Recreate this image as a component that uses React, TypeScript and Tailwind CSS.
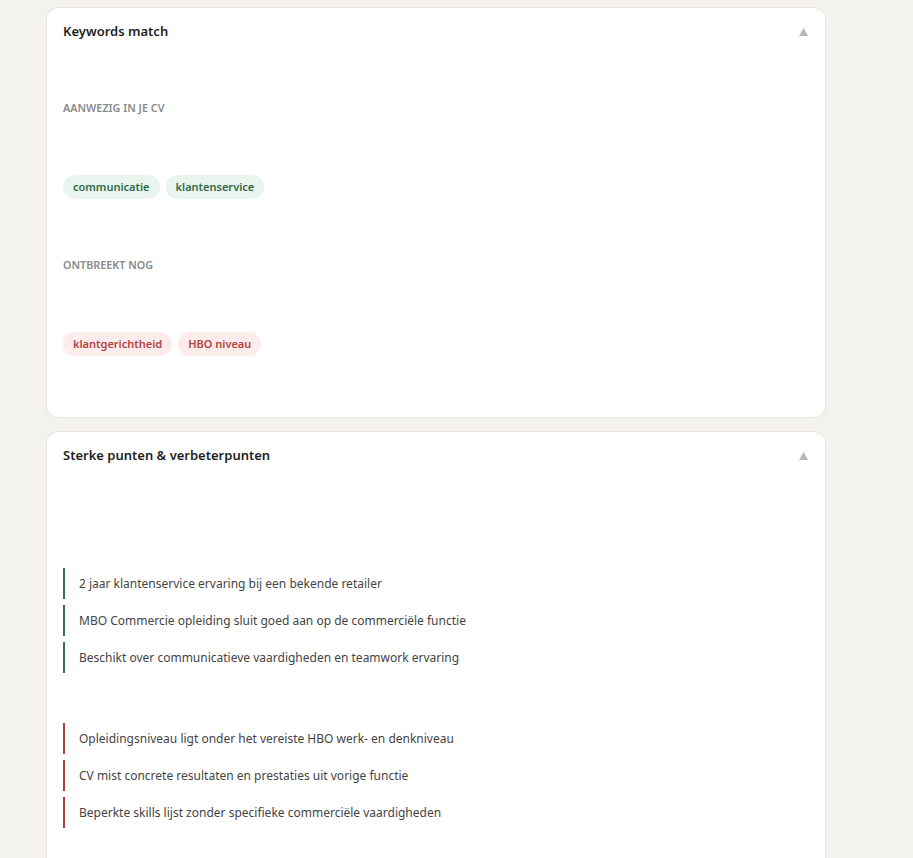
import React from "react";

const font = { fontFamily: '"Noto Sans", "Open Sans", sans-serif' };

function Header({ title }: { title: string }) {
  return (
    <div className="flex h-12 items-center justify-between pl-4 pr-4">
      <span className="text-[13px] font-semibold text-[#1f1f1f]">{title}</span>
      <svg width="9" height="8" viewBox="0 0 9 8" className="mr-[1px] mb-[1px]">
        <polygon points="4.5,0 9,8 0,8" fill="#b9b9b9" />
      </svg>
    </div>
  );
}

function Pill({ text, tone }: { text: string; tone: "green" | "red" }) {
  return (
    <span
      className={
        tone === "green"
          ? "inline-flex h-6 items-center rounded-full bg-[#e8f4ed] px-[10px] text-[11px] font-semibold text-[#2f6a48]"
          : "inline-flex h-6 items-center rounded-full bg-[#fcecec] px-[10px] text-[11px] font-semibold text-[#b4433f]"
      }
    >
      {text}
    </span>
  );
}

function Item({ text, tone }: { text: string; tone: "green" | "red" }) {
  return (
    <div
      className={
        tone === "green"
          ? "flex h-[31px] items-center border-l-2 border-[#3e6b54] pl-[14px] text-[12px] text-[#444444]"
          : "flex h-[31px] items-center border-l-2 border-[#a9403f] pl-[14px] text-[12px] text-[#444444]"
      }
    >
      {text}
    </div>
  );
}

export default function App() {
  return (
    <div className="min-h-[858px] w-full bg-[#f4f2ee]" style={font}>
      <div className="ml-[46px] flex w-[780px] flex-col gap-[13px] pt-[7px]">
        <div className="rounded-xl border border-[#e6e3de] bg-white">
          <Header title="Keywords match" />
          <div className="px-4 pt-[44px] pb-[61px]">
            <div className="h-4 text-[10.8px] font-semibold uppercase leading-4 text-[#8a8a8a]">
              Aanwezig in je CV
            </div>
            <div className="mt-[59px] flex gap-[6px]">
              <Pill text="communicatie" tone="green" />
              <Pill text="klantenservice" tone="green" />
            </div>
            <div className="mt-[58px] h-4 text-[10.8px] font-semibold uppercase leading-4 text-[#8a8a8a]">
              Ontbreekt nog
            </div>
            <div className="mt-[59px] flex gap-[6px]">
              <Pill text="klantgerichtheid" tone="red" />
              <Pill text="HBO niveau" tone="red" />
            </div>
          </div>
        </div>
        <div className="rounded-xl border border-[#e6e3de] bg-white">
          <Header title="Sterke punten & verbeterpunten" />
          <div className="px-4 pt-[88px] pb-[60px]">
            <div className="flex flex-col gap-[6px]">
              <Item tone="green" text="2 jaar klantenservice ervaring bij een bekende retailer" />
              <Item tone="green" text="MBO Commercie opleiding sluit goed aan op de commerciële functie" />
              <Item tone="green" text="Beschikt over communicatieve vaardigheden en teamwork ervaring" />
            </div>
            <div className="mt-[50px] flex flex-col gap-[6px]">
              <Item tone="red" text="Opleidingsniveau ligt onder het vereiste HBO werk- en denkniveau" />
              <Item tone="red" text="CV mist concrete resultaten en prestaties uit vorige functie" />
              <Item tone="red" text="Beperkte skills lijst zonder specifieke commerciële vaardigheden" />
            </div>
          </div>
        </div>
      </div>
    </div>
  );
}
